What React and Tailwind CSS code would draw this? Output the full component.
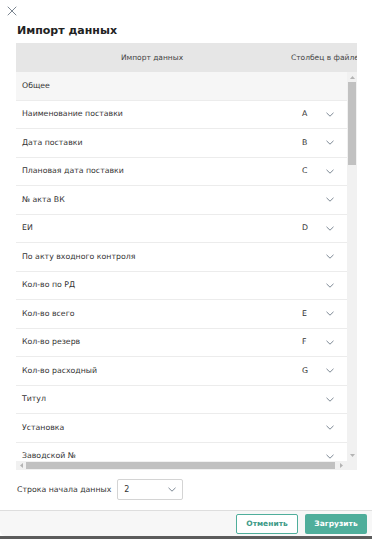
import { X } from 'lucide-react';

const rows = [
  { label: 'Наименование поставки', col: 'A' },
  { label: 'Дата поставки', col: 'B' },
  { label: 'Плановая дата поставки', col: 'C' },
  { label: '№ акта ВК', col: '' },
  { label: 'ЕИ', col: 'D' },
  { label: 'По акту входного контроля', col: '' },
  { label: 'Кол-во по РД', col: '' },
  { label: 'Кол-во всего', col: 'E' },
  { label: 'Кол-во резерв', col: 'F' },
  { label: 'Кол-во расходный', col: 'G' },
  { label: 'Титул', col: '' },
  { label: 'Установка', col: '' },
  { label: 'Заводской №', col: '' },
];

function Chevron({ className = '' }) {
  return (
    <svg width="8" height="5" viewBox="0 0 8 5" className={className}>
      <path d="M0.5 0.8 L4 4.2 L7.5 0.8" fill="none" stroke="#7d8894" strokeWidth="1" />
    </svg>
  );
}

function Arrow({ dir }) {
  const pts = {
    up: '0,3 2.5,0 5,3',
    down: '0,0 2.5,3 5,0',
    left: '3,0 0,2.5 3,5',
    right: '0,0 3,2.5 0,5',
  }[dir];
  const vertical = dir === 'up' || dir === 'down';
  return (
    <svg width={vertical ? 5 : 3} height={vertical ? 3 : 5} viewBox={vertical ? '0 0 5 3' : '0 0 3 5'}>
      <polygon points={pts} fill="#b4b4b4" />
    </svg>
  );
}

export default function App() {
  return (
    <div className="w-[372px] h-[539px] bg-white flex flex-col overflow-hidden" style={{ fontFamily: "'DejaVu Sans', Verdana, sans-serif" }}>
      <div className="h-[536px] flex flex-col rounded-b-[6px] overflow-hidden bg-white">
        <div className="h-[22px] pl-[4px] pt-[3px]">
          <X size={16} strokeWidth={1.5} className="text-[#7c8691]" />
        </div>
        <h2 className="pl-[17px] text-[11px] font-bold text-[#222] leading-[18px] h-[21px]">Импорт данных</h2>

        <div className="mx-[16px] w-[341px] flex flex-col">
          <div className="h-[29px] bg-[#e6e6e6] flex items-center text-[7.5px] text-[#444] whitespace-nowrap overflow-hidden">
            <div className="w-[272px] shrink-0 text-center">Импорт данных</div>
            <div className="pl-[3px] shrink-0">Столбец в файле</div>
          </div>

          <div className="flex">
            <div className="w-[331px] h-[389px] overflow-hidden text-[7.8px] text-[#333]">
              <div className="h-[28.5px] bg-[#f6f6f6] border-b border-[#ececec] flex items-center pl-[6px]">Общее</div>
              {rows.map((r) => (
                <div key={r.label} className="h-[28.5px] shrink-0 border-b border-[#ececec] flex items-center pl-[6px] pr-[13px]">
                  <div className="flex-1 whitespace-nowrap">{r.label}</div>
                  <div className="w-[24px]">{r.col}</div>
                  <Chevron />
                </div>
              ))}
            </div>
            <div className="w-[10px] h-[389px] bg-[#f1f1f1] flex flex-col items-center">
              <div className="h-[10px] flex items-center justify-center"><Arrow dir="up" /></div>
              <div className="w-[8px] h-[83px] bg-[#c1c1c1]"></div>
              <div className="flex-1"></div>
              <div className="h-[12px] flex items-center justify-center"><Arrow dir="down" /></div>
            </div>
          </div>

          <div className="flex h-[9px]">
            <div className="w-[331px] bg-[#f1f1f1] flex items-center">
              <div className="w-[10px] flex justify-center"><Arrow dir="left" /></div>
              <div className="w-[309px] h-[7px] bg-[#c1c1c1]"></div>
              <div className="flex-1 flex justify-center"><Arrow dir="right" /></div>
            </div>
            <div className="w-[10px] bg-[#f1f1f1]"></div>
          </div>
        </div>

        <div className="mt-[9px] pl-[17px] flex items-center gap-[6px] h-[21px]">
          <span className="text-[7.8px] text-[#333]">Строка начала данных</span>
          <div className="w-[66px] h-[21px] border border-[#d4d4d4] rounded-[2px] flex items-center justify-between pl-[6px] pr-[6px] text-[8px] text-[#333]">
            <span>2</span>
            <Chevron />
          </div>
        </div>

        <div className="mt-[10px] flex-1 border-t border-[#dedede] bg-[#f7f7f7] flex items-center justify-end gap-[7px] pr-[5px]">
          <button className="w-[62px] h-[20px] border border-[#4fae9b] rounded-[2px] bg-white text-[#3d9a87] text-[7.5px] font-bold">Отменить</button>
          <button className="w-[62px] h-[20px] rounded-[2px] bg-[#4fae9b] text-white text-[7.5px] font-bold">Загрузить</button>
        </div>
      </div>
      <div className="h-[3px] bg-[#5c5c5c]"></div>
    </div>
  );
}
